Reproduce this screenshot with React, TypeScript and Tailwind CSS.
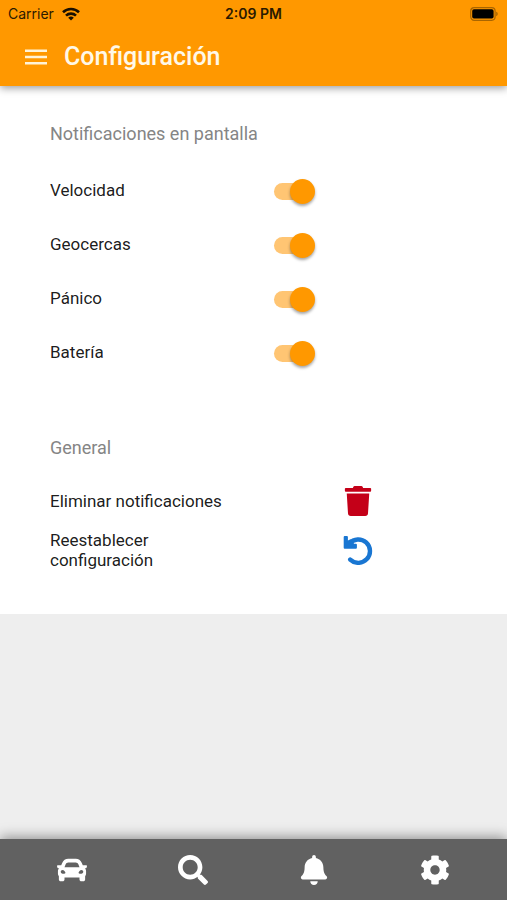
import { useState } from 'react';
import { FaBell, FaCar, FaCog, FaSearch, FaTrash } from 'react-icons/fa';

const options = [
    { id: 'velocidad', label: 'Velocidad' },
    { id: 'geocercas', label: 'Geocercas' },
    { id: 'panico', label: 'Pánico' },
    { id: 'bateria', label: 'Batería' },
];

const tabs = [
    { label: 'Vehículos', icon: FaCar },
    { label: 'Buscar', icon: FaSearch },
    { label: 'Notificaciones', icon: FaBell },
    { label: 'Configuración', icon: FaCog },
];

function StatusBar() {
    return (
        <div className="grid h-7 grid-cols-3 items-center px-2 font-['Inter',sans-serif] text-sm text-[#2b1a00]">
            <div className="flex items-center gap-2">
                <span>Carrier</span>
                <svg viewBox="0 0 18 14" className="h-[14px] w-[18px]" fill="none" stroke="#1a1000" strokeWidth="2.6">
                    <path d="M1 5.2a11.5 11.5 0 0 1 16 0" />
                    <path d="M4 8.6a7.2 7.2 0 0 1 10 0" />
                    <path d="M9 13.6 6.2 10.8a4 4 0 0 1 5.6 0z" fill="#1a1000" stroke="none" />
                </svg>
            </div>
            <span className="text-center font-semibold">2:09 PM</span>
            <svg viewBox="0 0 30 14" className="h-[14px] w-[30px] justify-self-end">
                <rect x="1.7" y="0.7" width="24.4" height="12.6" rx="3.5" fill="none" stroke="#a96500" strokeWidth="1.2" />
                <rect x="3.2" y="2.3" width="21.4" height="9.2" rx="1.8" fill="#000" />
                <path d="M27.2 4.8c2 .6 2 3.8 0 4.4z" fill="#a96500" />
            </svg>
        </div>
    );
}

function UndoIcon() {
    return (
        <svg viewBox="0 0 30 30" className="size-[30px]" fill="none" stroke="currentColor" strokeWidth="4.4">
            <path d="M6.5 8.4A11.7 11.7 0 1 1 7.2 24.6" strokeLinecap="round" />
            <path
                d="M1.7 1h2.2q1 0 1 1v3.4l2.6-1.2 3.6 4.6h1.8q1 0 1 1v3q0 1-1 1H1.7q-1 0-1-1V2q0-1 1-1z"
                fill="currentColor"
                stroke="none"
            />
        </svg>
    );
}

function ToggleRow({ id, label }: { id: string; label: string }) {
    const [checked, setChecked] = useState(true);

    return (
        <div className="grid h-[54px] grid-cols-[220px_1fr] items-center">
            <label htmlFor={id}>{label}</label>
            <span className="flex">
                <input
                    id={id}
                    type="checkbox"
                    role="switch"
                    checked={checked}
                    onChange={() => setChecked(!checked)}
                    className="relative ml-1 h-[17px] w-10 cursor-pointer appearance-none rounded-full bg-gray-300 before:absolute before:-top-1 before:left-0 before:size-[25px] before:rounded-full before:bg-white before:shadow-[0_2px_3px_rgba(0,0,0,0.35)] checked:bg-[#ffc573] checked:before:left-4 checked:before:bg-[#ff9800]"
                />
            </span>
        </div>
    );
}

export default function App() {
    return (
        <div className="flex min-h-screen flex-col bg-[#eeeeee] font-['Roboto',sans-serif] text-[17px] text-black/90">
            <header className="relative bg-[#ff9800] shadow-[0_2px_8px_rgba(0,0,0,0.4)]">
                <StatusBar />
                <div className="flex h-[58px] items-center gap-4 px-6">
                    <button aria-label="Menú" className="text-[#fff3d8]">
                        <svg viewBox="0 0 24 16" className="h-4 w-6" fill="currentColor">
                            <path d="M1 0.5h22v2.6H1zM1 6.7h22v2.6H1zM1 12.9h22v2.6H1z" />
                        </svg>
                    </button>
                    <h1 className="text-[25px] font-medium text-[#fff8e8]">Configuración</h1>
                </div>
            </header>

            <main className="bg-white px-[50px] pt-[38px] pb-10">
                <h2 className="mb-5 text-[18px] leading-5 text-[#858585]">Notificaciones en pantalla</h2>
                {options.map((option) => (
                    <ToggleRow key={option.id} id={option.id} label={option.label} />
                ))}

                <h2 className="mt-14 mb-4 text-[18px] leading-6 text-[#858585]">General</h2>
                <div className="grid auto-rows-[49px] grid-cols-[176px_1fr] items-center leading-5">
                    <span>Eliminar notificaciones</span>
                    <button aria-label="Eliminar notificaciones" className="ml-[117px] w-fit text-[#c40018]">
                        <FaTrash size={30} />
                    </button>
                    <span>Reestablecer configuración</span>
                    <button aria-label="Reestablecer configuración" className="ml-[117px] w-fit text-[#1976d2]">
                        <UndoIcon />
                    </button>
                </div>
            </main>

            <nav className="mt-auto grid h-[61px] grid-cols-4 bg-[#616161] px-[11px] text-white shadow-[0_-2px_12px_rgba(0,0,0,0.4)]">
                {tabs.map(({ label, icon: Icon }) => (
                    <button key={label} aria-label={label} className="flex items-center justify-center">
                        <Icon size={30} />
                    </button>
                ))}
            </nav>
        </div>
    );
}
